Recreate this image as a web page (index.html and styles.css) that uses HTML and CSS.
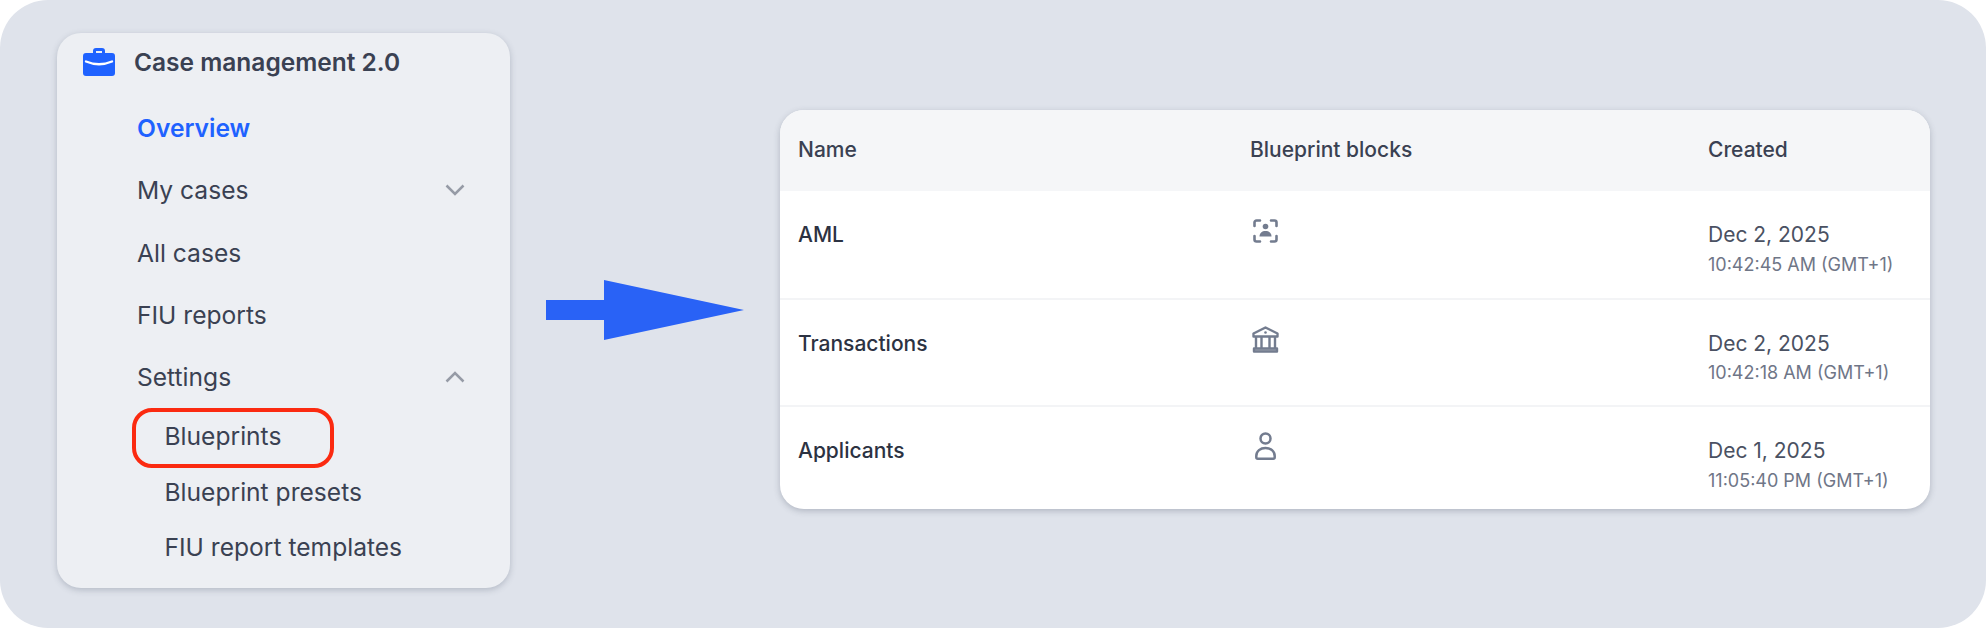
FILE: index.html
```html
<!DOCTYPE html>
<html lang="en">
<head>
<meta charset="utf-8">
<title>Case management 2.0</title>
<link rel="stylesheet" href="styles.css">
</head>
<body>
<div class="frame">
  <nav class="sidebar">
    <div class="brand">
      <svg class="brand-icon" viewBox="0 0 32 28"><path fill="#1f62ff" d="M10 5V3a3 3 0 0 1 3-3h6a3 3 0 0 1 3 3v2h7a3 3 0 0 1 3 3v17a3 3 0 0 1-3 3H3a3 3 0 0 1-3-3V8a3 3 0 0 1 3-3h7zm3-2v2h6V3h-6z"/><path fill="none" stroke="#fff" stroke-width="2.4" stroke-linecap="round" d="M3 13.5c8.500 3.600 17.500 3.600 26 0"/></svg>
      <span>Case management 2.0</span>
    </div>
    <div class="item active">Overview</div>
    <div class="item"><span>My cases</span><svg class="chev" viewBox="0 0 20 12"><path d="M1.500 1.500 10 10l8.500-8.500"/></svg></div>
    <div class="item">All cases</div>
    <div class="item">FIU reports</div>
    <div class="item"><span>Settings</span><svg class="chev" viewBox="0 0 20 12"><path d="M1.500 10.500 10 2l8.500 8.500"/></svg></div>
    <div class="sub marked">Blueprints</div>
    <div class="sub">Blueprint presets</div>
    <div class="sub">FIU report templates</div>
  </nav>

  <svg class="arrow" viewBox="0 0 198 60"><path fill="#2962f6" d="M0 20h58V0l140 30L58 60V40H0z"/></svg>

  <div class="card">
    <div class="row head"><div>Name</div><div>Blueprint blocks</div><div>Created</div></div>
    <div class="row">
      <div class="name">AML</div>
      <div><svg class="ic ic-face" viewBox="0 0 25 24"><g fill="none" stroke="#737c8f" stroke-width="2.600" stroke-linecap="round"><path d="M1.500 7V3.500a2 2 0 0 1 2-2H7M18 1.500h3.500a2 2 0 0 1 2 2V7M1.500 17v3.500a2 2 0 0 0 2 2H7M18 22.500h3.500a2 2 0 0 0 2-2V17"/></g><circle cx="12.500" cy="7.500" r="2.800" fill="#737c8f"/><path fill="#737c8f" d="M6.500 17.500c0-3.500 2.500-5.500 6-5.500s6 2 6 5.500z"/></svg></div>
      <div class="dates"><div class="date">Dec 2, 2025</div><div class="time">10:42:45 AM (GMT+1)</div></div>
    </div>
    <div class="row">
      <div class="name">Transactions</div>
      <div><svg class="ic ic-bank" viewBox="0 0 27 27"><g fill="none" stroke="#737c8f" stroke-width="2.400" stroke-linejoin="round"><path d="M13.500 1.500 25.500 7.500V10.500H1.500V7.500z"/><path d="M4 11v11M9.500 11v11M17.500 11v11M23 11v11"/><path d="M2 22.500h23v3H2z" fill="#737c8f" fill-opacity=".5"/></g><circle cx="13.500" cy="6.500" r="1.300" fill="#737c8f"/></svg></div>
      <div class="dates"><div class="date">Dec 2, 2025</div><div class="time">10:42:18 AM (GMT+1)</div></div>
    </div>
    <div class="row">
      <div class="name">Applicants</div>
      <div><svg class="ic ic-user" viewBox="0 0 21 28"><g fill="none" stroke="#737c8f" stroke-width="2.500"><circle cx="10.500" cy="6.500" r="5"/><path d="M1.300 24c0-5 4-8 9.200-8s9.200 3 9.200 8v1.200a1.500 1.500 0 0 1-1.500 1.500H2.800a1.500 1.500 0 0 1-1.500-1.500z"/></g></svg></div>
      <div class="dates"><div class="date">Dec 1, 2025</div><div class="time">11:05:40 PM (GMT+1)</div></div>
    </div>
  </div>
</div>
</body>
</html>
```
FILE: styles.css
```css
*, *::after { box-sizing: border-box; }
html, body { margin: 0; background: #fff; }
body { width: 1986px; height: 628px; overflow: hidden; font-family: Inter, "Liberation Sans", sans-serif; color: #3a4152; }

.frame {
  width: 1986px;
  height: 628px;
  background: #dfe3eb;
  border-radius: 48px;
  display: flex;
  align-items: flex-start;
  padding: 33px 0 0 57px;
}

.sidebar {
  width: 453px;
  height: 555px;
  flex: none;
  background: #edeff3;
  border-radius: 24px;
  box-shadow: 0 2px 6px rgba(70, 80, 100, .28);
  padding: 0 45px 0 26px;
}

.brand {
  display: flex;
  align-items: center;
  gap: 19px;
  height: 58px;
  margin-bottom: 6px;
  font-size: 24.500px;
  font-weight: 600;
}
.brand-icon { width: 32px; height: 28px; flex: none; }

.item {
  height: 62.250px;
  margin-left: 54px;
  display: flex;
  align-items: center;
  justify-content: space-between;
  font-size: 24.600px;
}
.item.active { color: #1f62ff; font-weight: 600; }
.chev { width: 20px; height: 12px; fill: none; stroke: #969ba6; stroke-width: 2.500; flex: none; }

.sub {
  height: 55.500px;
  margin-left: 81.500px;
  display: flex;
  align-items: center;
  font-size: 24.600px;
}
.marked { position: relative; }
.marked::after {
  content: "";
  position: absolute;
  left: -33px;
  top: 0;
  width: 202px;
  height: 60px;
  border: 4px solid #fb2a10;
  border-radius: 20px;
}

.arrow { width: 198px; height: 60px; flex: none; margin: 247px 0 0 36px; }

.card {
  width: 1150px;
  height: 399px;
  flex: none;
  margin: 77px 0 0 36px;
  background: #fff;
  border-radius: 24px;
  overflow: hidden;
  box-shadow: 0 2px 6px rgba(70, 80, 100, .3);
}

.row {
  display: grid;
  grid-template-columns: 452px 458px 1fr;
  padding-left: 18px;
  height: 107.500px;
  border-bottom: 2px solid #f3f4f6;
  padding-top: 32px;
  font-size: 21px;
  line-height: 24px;
}
.row:last-child { border-bottom: 0; height: 102px; }
.row.head { height: 81px; background: #f5f6f8; border-bottom: 0; padding-top: 28px; font-weight: 500; }
.row.head + .row { height: 108.500px; }
.name { font-weight: 500; color: #2c3242; }
.dates { color: #4a5162; }
.time { font-size: 18px; margin-top: 5.500px; color: #6f7687; }

.ic { display: block; }
.ic-face { width: 25px; height: 24px; margin: -4px 0 0 3px; }
.ic-bank { width: 27px; height: 27px; margin: -6px 0 0 2px; }
.ic-user { width: 21px; height: 28px; margin: -7px 0 0 5px; }
```
